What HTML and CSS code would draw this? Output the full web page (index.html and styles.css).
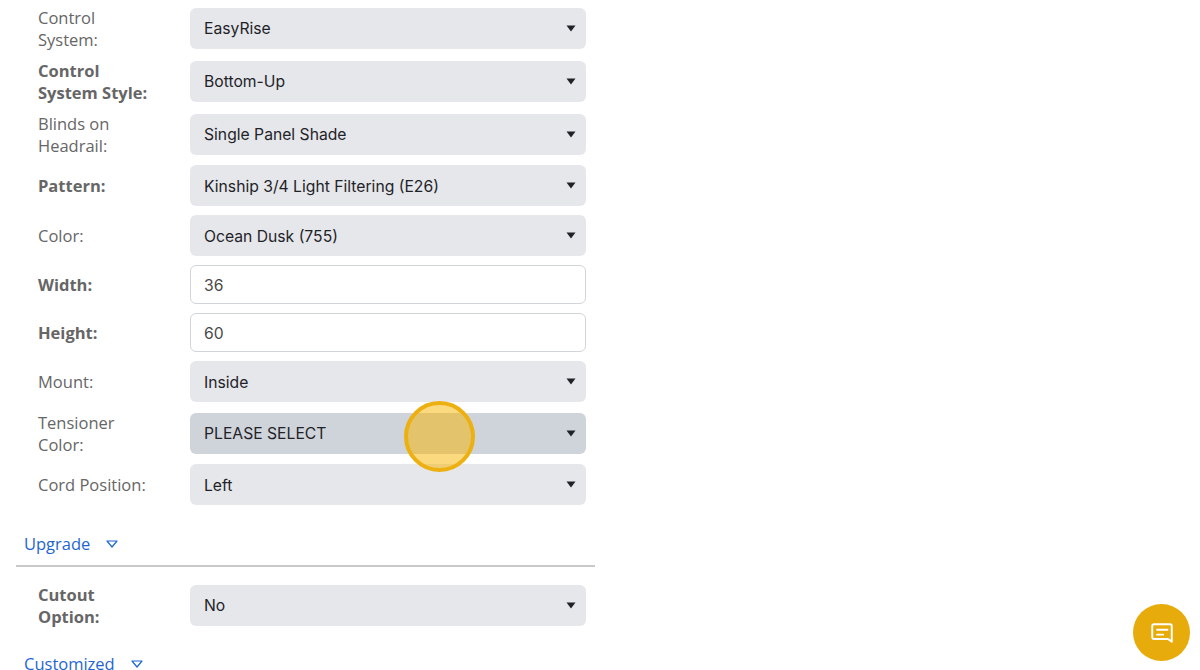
FILE: index.html
```html
<!DOCTYPE html>
<html lang="en">
<head>
  <meta charset="UTF-8">
  <title>Blind Options</title>
  <link rel="stylesheet" href="styles.css">
</head>
<body>
  <div class="options">
    <div class="row">
      <label class="row-label">Control System:</label>
      <div class="select-box"><select class="control"><option>EasyRise</option></select><svg class="caret" viewBox="0 0 10 7"><path d="M.5.5h9L5 6.500z"/></svg></div>
    </div>
    <div class="row">
      <label class="row-label required">Control System Style:</label>
      <div class="select-box"><select class="control"><option>Bottom-Up</option></select><svg class="caret" viewBox="0 0 10 7"><path d="M.5.5h9L5 6.500z"/></svg></div>
    </div>
    <div class="row">
      <label class="row-label">Blinds on Headrail:</label>
      <div class="select-box"><select class="control"><option>Single Panel Shade</option></select><svg class="caret" viewBox="0 0 10 7"><path d="M.5.5h9L5 6.500z"/></svg></div>
    </div>
    <div class="row">
      <label class="row-label required">Pattern:</label>
      <div class="select-box"><select class="control"><option>Kinship 3/4 Light Filtering (E26)</option></select><svg class="caret" viewBox="0 0 10 7"><path d="M.5.5h9L5 6.500z"/></svg></div>
    </div>
    <div class="row">
      <label class="row-label">Color:</label>
      <div class="select-box"><select class="control"><option>Ocean Dusk (755)</option></select><svg class="caret" viewBox="0 0 10 7"><path d="M.5.5h9L5 6.500z"/></svg></div>
    </div>
    <div class="row">
      <label class="row-label required">Width:</label>
      <input class="text-input" type="text" value="36">
    </div>
    <div class="row">
      <label class="row-label required">Height:</label>
      <input class="text-input" type="text" value="60">
    </div>
    <div class="row">
      <label class="row-label">Mount:</label>
      <div class="select-box"><select class="control"><option>Inside</option></select><svg class="caret" viewBox="0 0 10 7"><path d="M.5.5h9L5 6.500z"/></svg></div>
    </div>
    <div class="row">
      <label class="row-label">Tensioner Color:</label>
      <div class="select-box"><select class="control hovered"><option>PLEASE SELECT</option></select><svg class="caret" viewBox="0 0 10 7"><path d="M.5.5h9L5 6.500z"/></svg><span class="click-mark"></span></div>
    </div>
    <div class="row">
      <label class="row-label">Cord Position:</label>
      <div class="select-box"><select class="control"><option>Left</option></select><svg class="caret" viewBox="0 0 10 7"><path d="M.5.5h9L5 6.500z"/></svg></div>
    </div>
  </div>

  <div class="section-head upgrade-head">
    <a class="section-link" href="#">Upgrade</a>
    <svg class="section-arrow" viewBox="0 0 12 8"><path d="M1 1h10L6 7z"/></svg>
  </div>
  <div class="options">
    <div class="row">
      <label class="row-label required">Cutout Option:</label>
      <div class="select-box"><select class="control"><option>No</option></select><svg class="caret" viewBox="0 0 10 7"><path d="M.5.5h9L5 6.500z"/></svg></div>
    </div>
  </div>
  <div class="section-head custom-head">
    <a class="section-link" href="#">Customized</a>
    <svg class="section-arrow" viewBox="0 0 12 8"><path d="M1 1h10L6 7z"/></svg>
  </div>

  <button class="chat-btn" aria-label="Chat">
    <svg viewBox="0 0 24 24" width="26" height="26"><path d="M4.500 4h15A1.500 1.500 0 0 1 21 5.500V20l-3.500-2.500h-13A1.500 1.500 0 0 1 3 16V5.500A1.500 1.500 0 0 1 4.500 4z"/><path d="M7.500 9h9.500M7.500 13.500h5.500"/></svg>
  </button>
</body>
</html>
```

FILE: styles.css
```css
html, body { height: 100%; }
body {
  margin: 0;
  padding: 6.2px 0 0 16px;
  box-sizing: border-box;
  width: 1200px;
  height: 670px;
  overflow: hidden;
  background-color: #fff;
  font-family: "Open Sans", sans-serif;
  font-size: 16.5px;
}

.options {
  display: flex;
  flex-direction: column;
  gap: 9px;
  padding-left: 22px;
  width: 548px;
}

.row {
  display: flex;
  align-items: center;
}

.row-label {
  width: 152px;
  margin: 0.6px 0 -0.6px;
  padding-right: 36px;
  box-sizing: border-box;
  flex-shrink: 0;
  line-height: 22px;
  color: #666;
}
.required { font-weight: 700; }

.select-box {
  position: relative;
  width: 396px;
  height: 41px;
}

.control {
  appearance: none;
  display: block;
  width: 100%;
  height: 41px;
  padding: 1px 14px 0;
  border: 0;
  border-radius: 6px;
  background-color: #e5e7eb;
  color: #1f2328;
  font-family: Inter, sans-serif;
  font-size: 15.7px;
}
.hovered { background-color: #cfd4da; }

.caret {
  position: absolute;
  right: 10.5px;
  top: 17px;
  width: 10px;
  height: 7px;
  fill: #1f2328;
}

.text-input {
  width: 396px;
  height: 39px;
  padding: 1px 13px 0;
  box-sizing: border-box;
  border: 1px solid #d1d5db;
  border-radius: 6px;
  color: #4a4a4a;
  font-family: Inter, sans-serif;
  font-size: 15.7px;
}

.click-mark {
  position: absolute;
  z-index: 5;
  left: 214px;
  top: -12px;
  width: 71px;
  height: 71px;
  box-sizing: border-box;
  border: 4px solid #ecb011;
  border-radius: 50%;
  background-color: rgba(247, 180, 0, 0.5);
}

.section-head {
  display: flex;
  align-items: center;
  gap: 16px;
  padding-left: 8px;
}
.upgrade-head {
  width: 571px;
  height: 43px;
  margin-top: 17.3px;
  margin-bottom: 16px;
  border-bottom: 2px solid #c9c9c9;
}
.custom-head { margin-top: 25px; }

.section-link {
  color: #1f66d1;
  text-decoration: none;
  line-height: 24px;
}
.section-arrow {
  width: 12px;
  height: 8px;
  fill: none;
  stroke: #1f66d1;
  stroke-width: 1.2;
  stroke-linejoin: round;
}

.chat-btn {
  position: absolute;
  left: 1133px;
  top: 604px;
  width: 57px;
  height: 57px;
  padding: 0;
  border: 0;
  border-radius: 50%;
  background-color: #e8ab0c;
  display: flex;
  align-items: center;
  justify-content: center;
}
.chat-btn svg {
  fill: none;
  stroke: #fff;
  stroke-width: 1.8;
  stroke-linejoin: round;
  stroke-linecap: round;
}
```
